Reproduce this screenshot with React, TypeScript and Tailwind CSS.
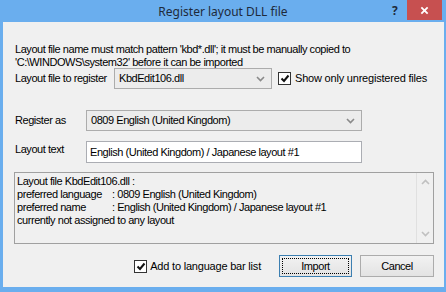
import React from "react";

const Chevron = () => (
  <svg width="9" height="6" viewBox="0 0 9 6" className="shrink-0">
    <path d="M1 1 L4.5 4.5 L8 1" stroke="#8a8a8a" strokeWidth="1.6" fill="none" />
  </svg>
);

const Check = () => (
  <div className="w-[13px] h-[13px] border border-[#333333] bg-white flex items-center justify-center shrink-0">
    <svg width="10" height="9" viewBox="0 0 10 9">
      <path d="M1.5 4.5 L4 7 L8.5 1.5" stroke="#111" strokeWidth="2" fill="none" />
    </svg>
  </div>
);

export default function App() {
  const font = { fontFamily: '"Liberation Sans", Arial, sans-serif' };
  return (
    <div className="w-[446px] h-[292px] bg-[#6aaeee] flex flex-col overflow-hidden" style={font}>
      <div className="h-[22px] flex items-center relative shrink-0">
        <div className="flex-1 text-center text-[12px] text-[#1e2a3a] pt-[1px]" style={{ fontFamily: '"Noto Sans", sans-serif' }}>
          Register layout DLL file
        </div>
        <div className="absolute left-[392px] top-[2px] text-[12px] font-bold text-[#1e2a3a]" style={{ fontFamily: '"Noto Sans", sans-serif' }}>?</div>
        <div className="absolute left-[407px] top-0 w-[35px] h-[20px] bg-[#c75050] flex items-center justify-center">
          <svg width="9" height="9" viewBox="0 0 10 10">
            <path d="M1.5 1.5 L8.5 8.5 M8.5 1.5 L1.5 8.5" stroke="white" strokeWidth="2" />
          </svg>
        </div>
      </div>
      <div className="ml-[3px] mr-[2px] mb-[5px] flex-1 bg-[#f0f0f0] flex flex-col text-[11px] tracking-[-0.45px] text-black pl-[11px] pr-[10px] whitespace-nowrap">
        <div className="mt-[21px] leading-[13px] pl-[1px]">
          <div>Layout file name must match pattern 'kbd*.dll'; it must be manually copied to</div>
          <div>'C:\WINDOWS\system32' before it can be imported</div>
        </div>
        <div className="mt-[-1px] h-[21px] flex items-center">
          <div className="w-[100px] pl-[1px]">Layout file to register</div>
          <div className="w-[158px] h-[21px] border border-[#acacac] bg-[#ececec] flex items-center pl-[4px] pr-[6px]">
            <span className="flex-1">KbdEdit106.dll</span>
            <Chevron />
          </div>
          <div className="ml-[6px] flex items-center gap-[4px]">
            <Check />
            <span className="tracking-[-0.2px]">Show only unregistered files</span>
          </div>
        </div>
        <div className="mt-[21px] h-[21px] flex items-center">
          <div className="w-[72px] pl-[1px]">Register as</div>
          <div className="w-[276px] h-[21px] border border-[#acacac] bg-[#ececec] flex items-center pl-[4px] pr-[6px]">
            <span className="flex-1">0809 English (United Kingdom)</span>
            <Chevron />
          </div>
        </div>
        <div className="mt-[10px] h-[22px] flex items-center">
          <div className="w-[72px] pl-[1px] self-start">Layout text</div>
          <div className="w-[276px] h-[22px] border border-[#abadb3] bg-white flex items-center pl-[3px]">
            English (United Kingdom) / Japanese layout #1
          </div>
        </div>
        <div className="mt-[9px] h-[72px] border border-[#a0a0a0] flex bg-[#f0f0f0]">
          <div className="flex-1 pl-[2px] pt-[2px] leading-[13px]">
            <div>Layout file KbdEdit106.dll :</div>
            <div className="flex"><span className="w-[95px]">preferred language</span><span>: 0809 English (United Kingdom)</span></div>
            <div className="flex"><span className="w-[95px]">preferred name</span><span>: English (United Kingdom) / Japanese layout #1</span></div>
            <div>currently not assigned to any layout</div>
          </div>
          <div className="w-[17px] border-l border-[#e0e0e0] flex flex-col items-center justify-between py-[6px]">
            <svg width="9" height="6" viewBox="0 0 9 6"><path d="M1 5 L4.5 1.5 L8 5" stroke="#c0c0c0" strokeWidth="1.6" fill="none" /></svg>
            <svg width="9" height="6" viewBox="0 0 9 6"><path d="M1 1 L4.5 4.5 L8 1" stroke="#c0c0c0" strokeWidth="1.6" fill="none" /></svg>
          </div>
        </div>
        <div className="mt-[11px] h-[22px] flex items-center justify-end">
          <div className="flex items-center gap-[3px] mr-[18px]">
            <Check />
            <span className="tracking-[-0.2px]">Add to language bar list</span>
          </div>
          <div className="w-[73px] h-[22px] border border-[#3c7fb1] bg-gradient-to-b from-[#f2f2f2] to-[#e3e3e3] p-[2px]">
            <div className="w-full h-full border border-dotted border-black flex items-center justify-center">Import</div>
          </div>
          <div className="ml-[8px] w-[74px] h-[22px] border border-[#acacac] bg-gradient-to-b from-[#f2f2f2] to-[#e3e3e3] flex items-center justify-center">
            Cancel
          </div>
        </div>
      </div>
    </div>
  );
}
